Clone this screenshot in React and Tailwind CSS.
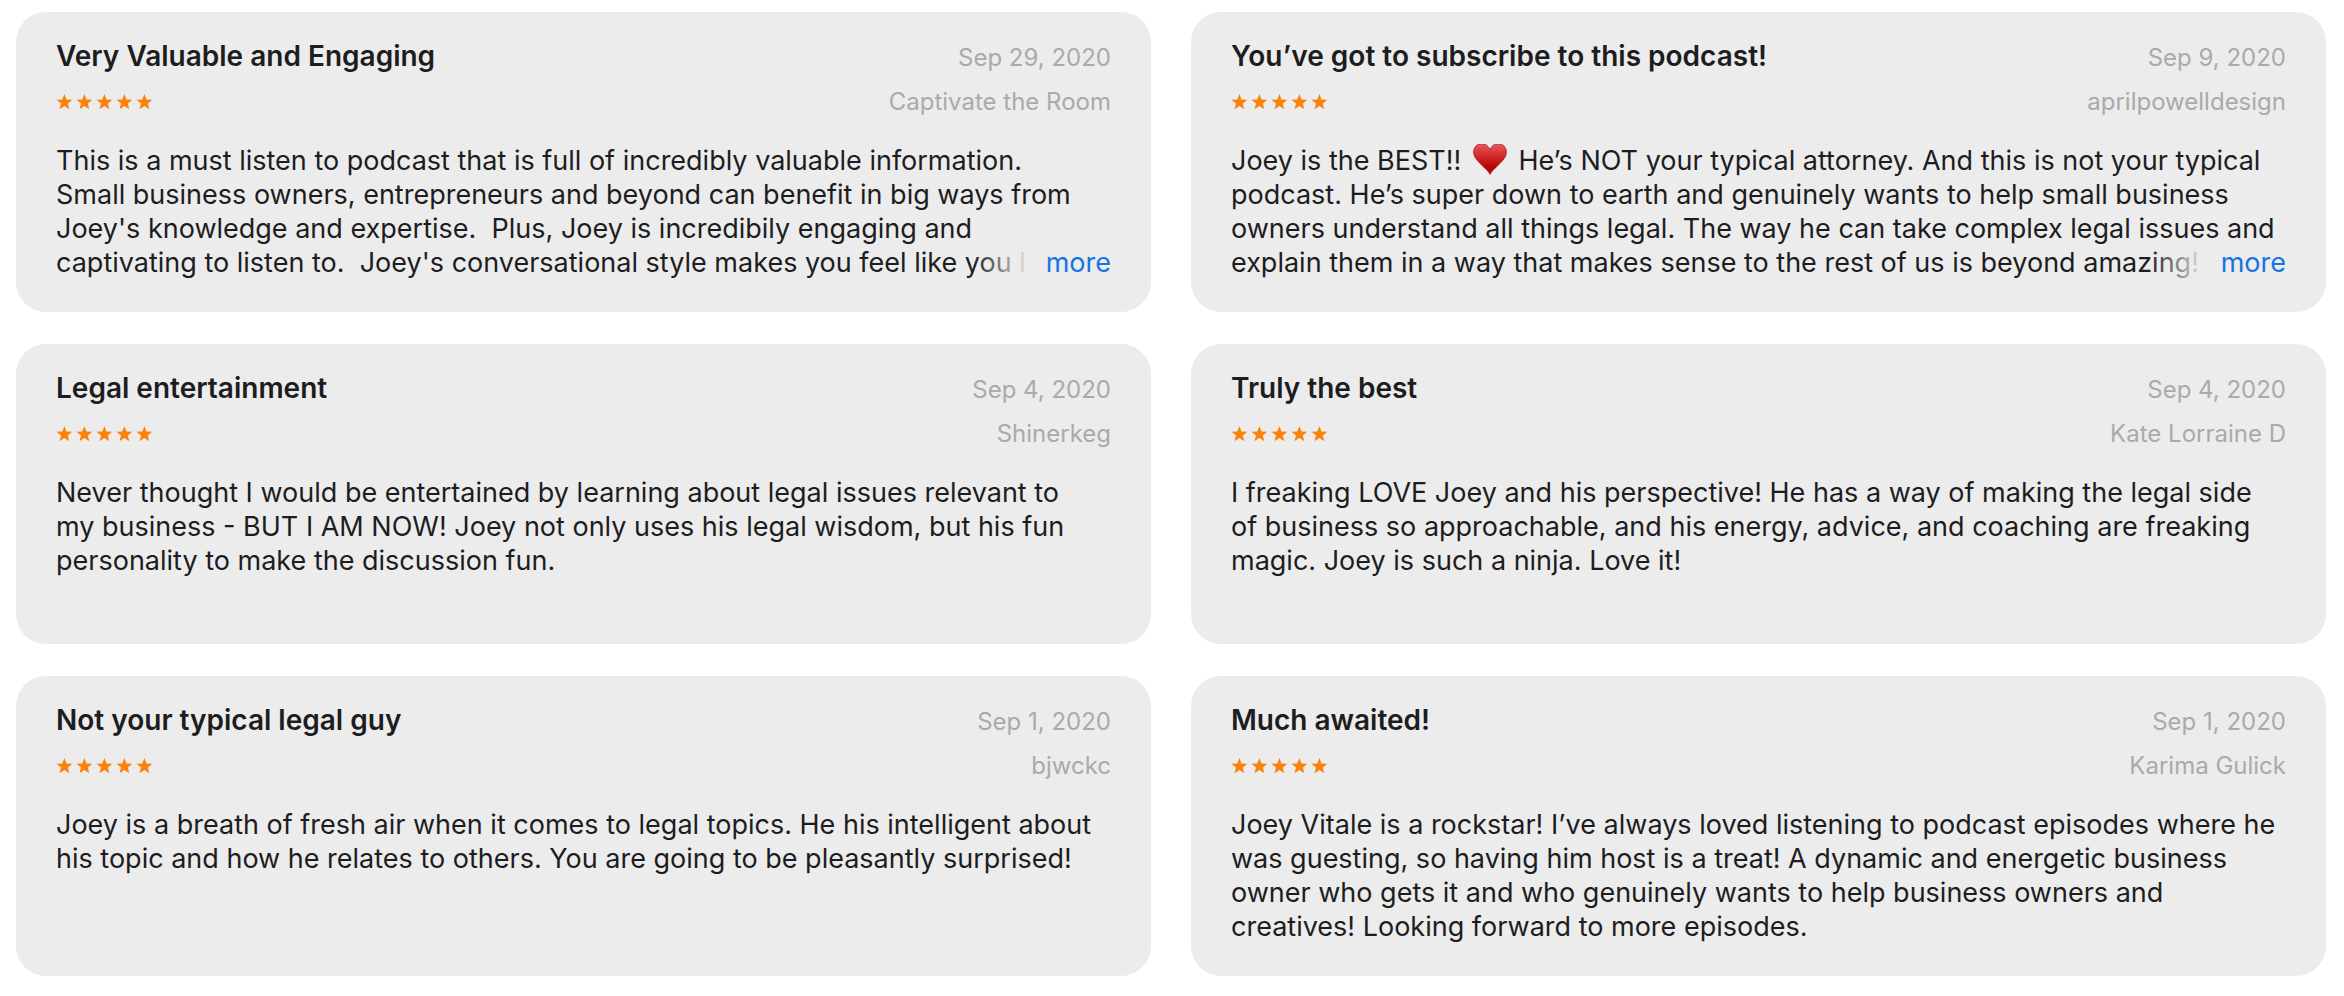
const reviews = [
  {
    title: "Very Valuable and Engaging",
    date: "Sep 29, 2020",
    author: "Captivate the Room",
    lines: [
      "This is a must listen to podcast that is full of incredibly valuable information.",
      "Small business owners, entrepreneurs and beyond can benefit in big ways from",
      "Joey's knowledge and expertise.  Plus, Joey is incredibily engaging and",
      "captivating to listen to.  Joey's conversational style makes you feel like you l",
    ],
    more: true,
  },
  {
    title: "You’ve got to subscribe to this podcast!",
    date: "Sep 9, 2020",
    author: "aprilpowelldesign",
    lines: [
      "Joey is the BEST!! ♥ He’s NOT your typical attorney. And this is not your typical",
      "podcast. He’s super down to earth and genuinely wants to help small business",
      "owners understand all things legal. The way he can take complex legal issues and",
      "explain them in a way that makes sense to the rest of us is beyond amazing!",
    ],
    more: true,
  },
  {
    title: "Legal entertainment",
    date: "Sep 4, 2020",
    author: "Shinerkeg",
    lines: [
      "Never thought I would be entertained by learning about legal issues relevant to",
      "my business - BUT I AM NOW! Joey not only uses his legal wisdom, but his fun",
      "personality to make the discussion fun.",
    ],
  },
  {
    title: "Truly the best",
    date: "Sep 4, 2020",
    author: "Kate Lorraine D",
    lines: [
      "I freaking LOVE Joey and his perspective! He has a way of making the legal side",
      "of business so approachable, and his energy, advice, and coaching are freaking",
      "magic. Joey is such a ninja. Love it!",
    ],
  },
  {
    title: "Not your typical legal guy",
    date: "Sep 1, 2020",
    author: "bjwckc",
    lines: [
      "Joey is a breath of fresh air when it comes to legal topics. He his intelligent about",
      "his topic and how he relates to others. You are going to be pleasantly surprised!",
    ],
  },
  {
    title: "Much awaited!",
    date: "Sep 1, 2020",
    author: "Karima Gulick",
    lines: [
      "Joey Vitale is a rockstar! I’ve always loved listening to podcast episodes where he",
      "was guesting, so having him host is a treat! A dynamic and energetic business",
      "owner who gets it and who genuinely wants to help business owners and",
      "creatives! Looking forward to more episodes.",
    ],
  },
];

function Stars() {
  return (
    <div role="img" aria-label="5 out of 5 stars" className="flex gap-1">
      {[0, 1, 2, 3, 4].map((n) => (
        <svg key={n} viewBox="0 0 16 16" className="size-4 overflow-visible fill-[#fb830b]">
          <path d="M8.400 0 10.500 5.500 16.300 5.800 11.800 9.500 13.300 15.300 8.400 12.100 3.500 15.300 5 9.500 .5 5.800 6.300 5.500Z" />
        </svg>
      ))}
    </div>
  );
}

function Heart() {
  return (
    <svg viewBox="0 0 34 32" role="img" aria-label="heart" className="mx-1 -mt-2 inline-block h-8 w-[34px] align-middle">
      <defs>
        <linearGradient id="heart-fill" x1="0" y1="0" x2="0" y2="1">
          <stop offset="0" stopColor="#e65a5c" />
          <stop offset="0.4" stopColor="#d22a2a" />
          <stop offset="0.75" stopColor="#b80503" />
          <stop offset="1" stopColor="#a01410" />
        </linearGradient>
      </defs>
      <path
        fill="url(#heart-fill)"
        stroke="#a82222"
        strokeWidth="0.8"
        d="M17 31.400C15.600 28.600 12.500 25.800 8.600 22 4 17.600.6 13.800.6 9.100.6 4.200 4.100.7 8.700.7 12.500.7 15.600 3 17 6.600 18.400 3 21.500.7 25.300.7 29.900.7 33.400 4.200 33.400 9.100 33.400 13.800 30 17.600 25.400 22 21.500 25.800 18.400 28.600 17 31.400Z"
      />
    </svg>
  );
}

function Line({ text }) {
  const [before, after] = text.split("♥");
  return (
    <>
      {before}
      {after !== undefined && <Heart />}
      {after}
      {"\n"}
    </>
  );
}

function ReviewCard({ review }) {
  return (
    <article className="min-h-[300px] rounded-[30px] bg-[#ececec] px-10 pt-6 pb-8">
      <header className="flex flex-col gap-2">
        <div className="flex items-baseline justify-between gap-4">
          <h3 className="text-[28px] leading-10 font-semibold">{review.title}</h3>
          <time className="text-2xl leading-9 text-[#aaaaaa]">{review.date}</time>
        </div>
        <div className="flex items-center justify-between gap-4">
          <Stars />
          <span className="text-2xl leading-9 text-[#aaaaaa]">{review.author}</span>
        </div>
      </header>
      <div className="relative mt-6">
        <p className="overflow-hidden text-[27px] leading-[34px] whitespace-pre-wrap">
          {review.lines.map((line) => (
            <Line key={line} text={line} />
          ))}
        </p>
        {review.more && (
          <div className="absolute right-0 bottom-0 flex">
            <span className="w-14 bg-linear-to-r from-[#ececec]/0 to-[#ececec]" />
            <button type="button" className="bg-[#ececec] pl-4 text-[27px] leading-[34px] text-[#1673e6]">
              more
            </button>
          </div>
        )}
      </div>
    </article>
  );
}

export default function App() {
  return (
    <main className="grid grid-cols-2 gap-x-10 gap-y-8 bg-white py-3 pr-[18px] pl-4 font-['Inter',sans-serif] text-[#1d1d1f]">
      {reviews.map((review) => (
        <ReviewCard key={review.title} review={review} />
      ))}
    </main>
  );
}
